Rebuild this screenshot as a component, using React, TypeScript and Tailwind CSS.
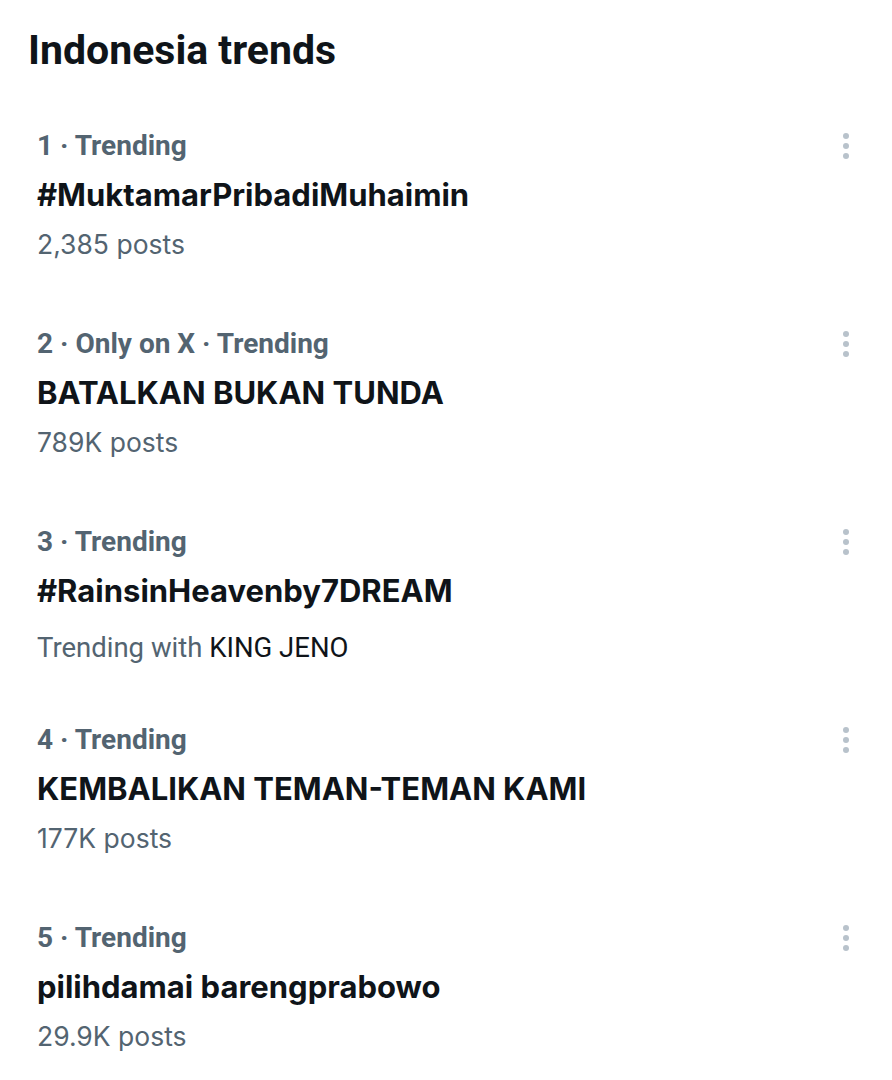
const TRENDS = [
  { meta: "1 · Trending", title: "#MuktamarPribadiMuhaimin", sub: "2,385 posts" },
  { meta: "2 · Only on X · Trending", title: "BATALKAN BUKAN TUNDA", sub: "789K posts" },
  { meta: "3 · Trending", title: "#RainsinHeavenby7DREAM", with: "KING JENO" },
  { meta: "4 · Trending", title: "KEMBALIKAN TEMAN-TEMAN KAMI", sub: "177K posts" },
  { meta: "5 · Trending", title: "pilihdamai barengprabowo", sub: "29.9K posts" },
];

function MoreDots() {
  return (
    <div className="flex flex-col items-center gap-[4px] pt-[11px]">
      <span className="h-[6px] w-[6px] rounded-full bg-[#b8c2cb]" />
      <span className="h-[6px] w-[6px] rounded-full bg-[#b8c2cb]" />
      <span className="h-[6px] w-[6px] rounded-full bg-[#b8c2cb]" />
    </div>
  );
}

export default function App() {
  return (
    <div className="min-h-[1080px] w-[892px] bg-white font-['Roboto',sans-serif] text-[#0f1419]">
      <h1 className="pl-[28px] pt-[22px] text-[41px] font-bold leading-[56px]">
        Indonesia trends
      </h1>
      <div className="mt-[44px]">
        {TRENDS.map((t) => (
          <div key={t.title} className="flex h-[198px] items-start pl-[37px] pr-[43px]">
            <div className="flex-1">
              <div className="text-[28px] font-bold leading-[48px] text-[#536471]">{t.meta}</div>
              <div className="font-['Inter',sans-serif] text-[31px] font-bold leading-[50px]">
                {t.title}
              </div>
              {t.with ? (
                <div className="mt-[8px] text-[27.5px] leading-[48px] text-[#536471]">
                  Trending with <span className="text-[#0f1419]">{t.with}</span>
                </div>
              ) : (
                <div className="font-['Inter',sans-serif] text-[26.5px] leading-[48px] text-[#536471]">
                  {t.sub}
                </div>
              )}
            </div>
            <MoreDots />
          </div>
        ))}
      </div>
    </div>
  );
}
